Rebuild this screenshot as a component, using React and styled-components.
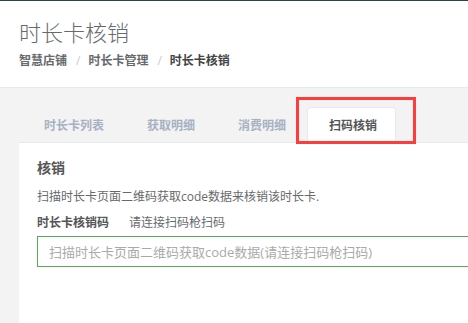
import React from 'react';
import styled, { createGlobalStyle } from 'styled-components';

const GlobalStyle = createGlobalStyle`
  html, body {
    margin: 0;
    padding: 0;
    overflow: hidden;
    background: #f3f3f4;
  }
  body {
    font-family: "Open Sans", "Noto Sans CJK SC", sans-serif;
    color: #676a6c;
  }
`;

const Page = styled.div`
  width: 560px;
  min-height: 323px;
  border-top: 1px solid #2f4050;
`;

const Header = styled.div`
  background: #fff;
  border-bottom: 1px solid #e7eaec;
  padding: 18px 19px 0;
  box-sizing: border-box;
  height: 87px;
  > h2 {
    margin: 0;
    font-size: 22px;
    line-height: 26px;
    font-weight: 300;
    color: #676a6c;
  }
`;

const Crumbs = styled.ol`
  display: flex;
  list-style: none;
  margin: 8px 0 0;
  padding: 0;
  font-size: 12px;
  line-height: 16px;
  font-weight: bold;
  > li {
    color: #676a6c;
    &.active {
      color: #444;
    }
  }
  > li + li::before {
    content: '/';
    color: #ccc;
    font-weight: normal;
    padding: 0 8px 0 9px;
  }
`;

const Main = styled.div`
  padding: 19px 0 0 19px;
`;

const TabBar = styled.ul`
  display: flex;
  list-style: none;
  margin: 0;
  padding: 0 0 0 3px;
`;

const Tab = styled.li`
  position: relative;
  height: 36px;
  line-height: 36px;
  padding: 0 18px 0 21px;
  margin-right: 2px;
  margin-bottom: -1px;
  font-size: 12px;
  font-weight: bold;
  color: ${(p) => (p.active ? '#555' : '#a7b1c2')};
  background: ${(p) => (p.active ? '#fff' : 'transparent')};
  border: 1px solid ${(p) => (p.active ? '#e7eaec' : 'transparent')};
  border-bottom: none;
  border-radius: 4px 4px 0 0;
  box-sizing: border-box;
  z-index: 1;
  cursor: pointer;
`;

const Highlight = styled.span`
  position: absolute;
  top: -11px;
  left: -12px;
  right: -21px;
  bottom: -1px;
  border: 3px solid #ff3b3b;
  pointer-events: none;
`;

const Panel = styled.div`
  background: #fff;
  border-top: 1px solid #e7eaec;
  padding: 15px 18px 60px;
  > h3 {
    margin: 0;
    font-size: 14px;
    line-height: 20px;
    font-weight: bold;
    color: #555;
  }
  > p {
    margin: 10px 0 0;
    font-size: 12px;
    line-height: 18px;
    color: #676a6c;
  }
`;

const FieldRow = styled.div`
  display: flex;
  margin-top: 8px;
  font-size: 12px;
  line-height: 18px;
  > label {
    font-weight: bold;
    color: #555;
    width: 92px;
  }
  > span {
    color: #676a6c;
  }
`;

const CodeInput = styled.input`
  display: block;
  width: 100%;
  box-sizing: border-box;
  height: 31px;
  margin-top: 4px;
  padding: 0 11px;
  border: 1px solid #5aaa55;
  outline: none;
  font-family: "Open Sans", "Noto Sans CJK SC", sans-serif;
  font-size: 13px;
  color: #555;
  &::placeholder {
    color: #aaa;
  }
`;

const tabs = ['时长卡列表', '获取明细', '消费明细', '扫码核销'];

function App() {
  const current = 3;

  return (
    <Page>
      <GlobalStyle />
      <Header>
        <h2>时长卡核销</h2>
        <Crumbs>
          <li>智慧店铺</li>
          <li>时长卡管理</li>
          <li className="active">时长卡核销</li>
        </Crumbs>
      </Header>
      <Main>
        <TabBar>
          {tabs.map((t, i) => (
            <Tab key={t} active={i === current}>
              {t}
              {i === current && <Highlight />}
            </Tab>
          ))}
        </TabBar>
        <Panel>
          <h3>核销</h3>
          <p>扫描时长卡页面二维码获取code数据来核销该时长卡.</p>
          <FieldRow>
            <label>时长卡核销码</label>
            <span>请连接扫码枪扫码</span>
          </FieldRow>
          <CodeInput placeholder="扫描时长卡页面二维码获取code数据(请连接扫码枪扫码)" />
        </Panel>
      </Main>
    </Page>
  );
}

export default App;
